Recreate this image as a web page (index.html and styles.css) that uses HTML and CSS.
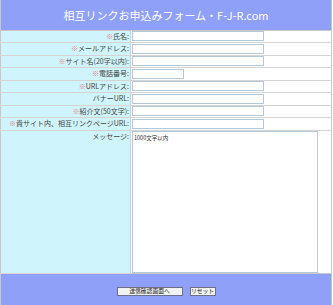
FILE: index.html
```html
<!DOCTYPE html>
<html lang="ja">
<head>
  <meta charset="UTF-8" />
  <title>相互リンクお申込みフォーム</title>
  <link rel="stylesheet" href="styles.css">
</head>
<body>
  <form id="linkForm">
    <table class="form-table">
      <tr>
        <th colspan="2" class="title">相互リンクお申込みフォーム・F-J-R.com</th>
      </tr>
      <tr>
        <td class="lbl"><span class="req">※</span>氏名:</td>
        <td class="fld"><input type="text" class="txt" name="name"></td>
      </tr>
      <tr>
        <td class="lbl"><span class="req">※</span>メールアドレス:</td>
        <td class="fld"><input type="text" class="txt" name="mail"></td>
      </tr>
      <tr>
        <td class="lbl"><span class="req">※</span>サイト名(20字以内):</td>
        <td class="fld"><input type="text" class="txt" name="site"></td>
      </tr>
      <tr>
        <td class="lbl"><span class="req">※</span>電話番号:</td>
        <td class="fld"><input type="text" class="txt short" name="tel"></td>
      </tr>
      <tr>
        <td class="lbl"><span class="req">※</span>URLアドレス:</td>
        <td class="fld"><input type="text" class="txt" name="url"></td>
      </tr>
      <tr>
        <td class="lbl">バナーURL:</td>
        <td class="fld"><input type="text" class="txt" name="banner"></td>
      </tr>
      <tr>
        <td class="lbl"><span class="req">※</span>紹介文(50文字):</td>
        <td class="fld"><input type="text" class="txt" name="intro"></td>
      </tr>
      <tr>
        <td class="lbl"><span class="req">※</span>貴サイト内、相互リンクページURL:</td>
        <td class="fld"><input type="text" class="txt" name="linkpage"></td>
      </tr>
      <tr class="msg-row">
        <td class="lbl top">メッセージ:</td>
        <td class="fld top"><textarea class="msg" name="message">1000文字以内</textarea></td>
      </tr>
      <tr>
        <td colspan="2" class="foot">
          <div class="btn-row">
            <button type="submit" class="btn wide">送信確認画面へ</button>
            <button type="reset" class="btn">リセット</button>
          </div>
        </td>
      </tr>
    </table>
  </form>
</body>
</html>
```

FILE: styles.css
```css
* {
  box-sizing: border-box;
  margin: 0;
  padding: 0;
}

body {
  background: #fff;
  font-family: "Noto Sans CJK JP", "Noto Sans", sans-serif;
}

.form-table {
  width: 332px;
  height: 305px;
  border-collapse: collapse;
  border-left: 1px solid #c8c8c8;
  border-right: 1px solid #c8c8c8;
}

.title {
  height: 30px;
  background: #8fa0f8;
  color: #fff;
  font-size: 11px;
  font-weight: normal;
  text-align: center;
  border-bottom: 1px solid #c8c8c8;
}

.lbl,
.fld {
  height: 12.5px;
  border-bottom: 1px solid #d4d4d4;
  font-size: 7px;
  color: #444;
  line-height: 1;
}

.lbl {
  width: 130px;
  background: #d0f4fc;
  text-align: right;
  padding-right: 1px;
  border-right: 1px solid #c8d0d8;
  white-space: nowrap;
}

.fld {
  padding-left: 1px;
}

.top {
  vertical-align: top;
}

.lbl.top {
  padding-top: 2px;
}

.req {
  color: #e87888;
}

.txt {
  display: block;
  width: 132px;
  height: 10px;
  border: 1px solid #b4c8d8;
  background: #fff;
}

.txt.short {
  width: 52px;
}

.msg-row .fld {
  height: 142px;
  border-bottom: 1px solid #c8c8c8;
}

.msg {
  display: block;
  width: 186px;
  height: 142px;
  border: 1px solid #b4c8d8;
  border-right-color: #c8c8c8;
  font-family: "Noto Sans CJK JP", sans-serif;
  font-size: 5.5px;
  color: #333;
  padding: 2px 1px;
  resize: none;
  overflow-y: scroll;
}

.msg::-webkit-scrollbar {
  width: 6px;
  background: #f4f4f4;
  border-left: 1px solid #e4e4e4;
}

.msg::-webkit-scrollbar-button:single-button {
  display: block;
  height: 6px;
  background: #e4e4e4;
  border: 1px solid #d0d0d0;
}

.foot {
  height: 32px;
  background: #8fa0f8;
  vertical-align: top;
}

.btn-row {
  display: flex;
  justify-content: center;
  gap: 7px;
  padding-top: 13px;
}

.btn {
  height: 9px;
  width: 26px;
  padding: 0;
  border: 1px solid #6a7088;
  background: #f2f2f2;
  font-family: "Noto Sans CJK JP", sans-serif;
  font-size: 5.8px;
  line-height: 1;
  color: #222;
  cursor: pointer;
}

.btn.wide {
  width: 66px;
}
```
